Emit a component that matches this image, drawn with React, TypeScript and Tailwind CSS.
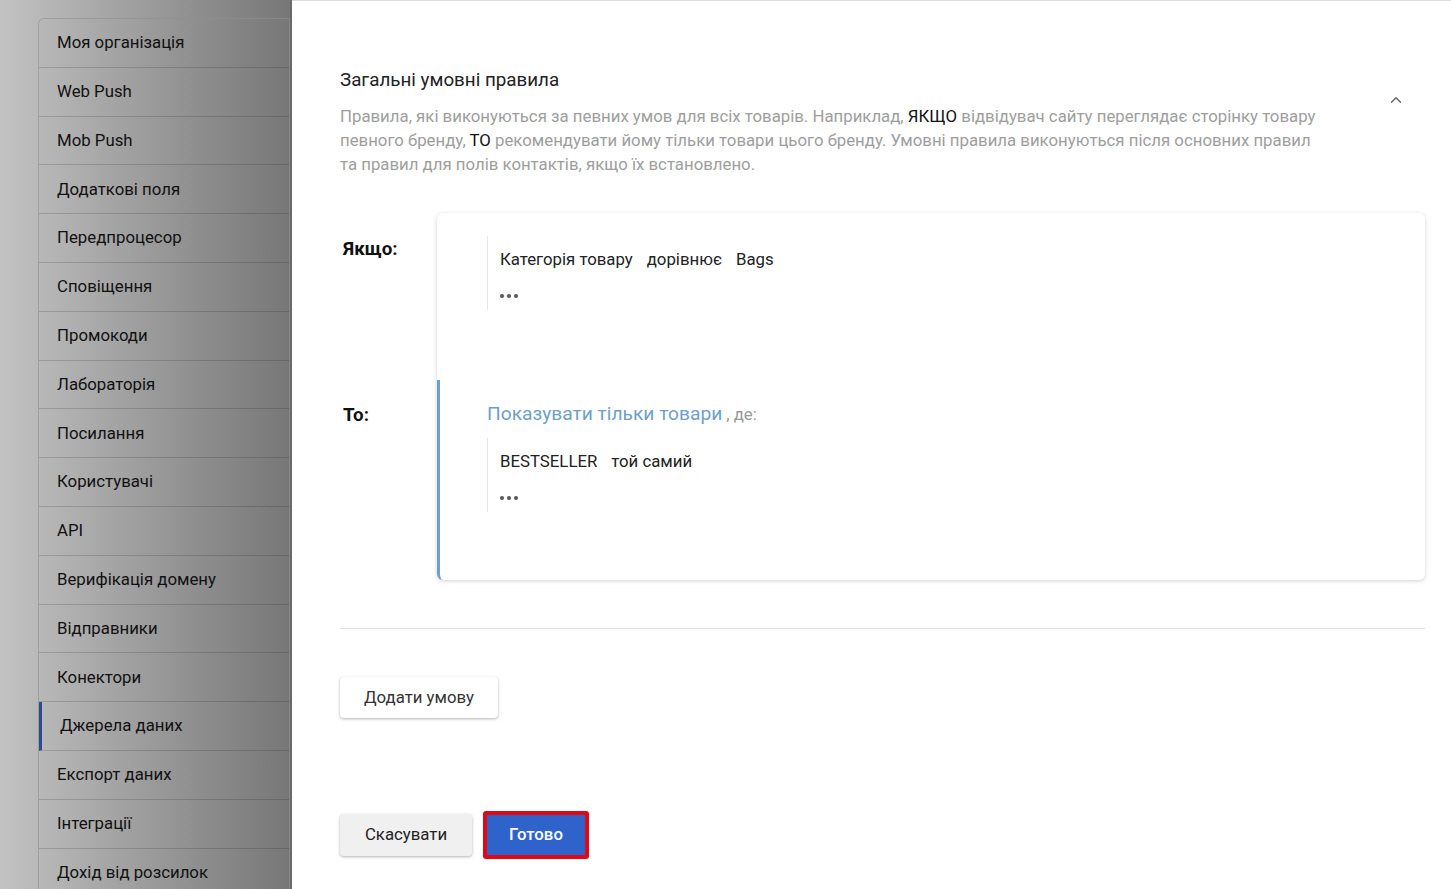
import { ChevronUp } from "lucide-react";

const menu = [
  "Моя організація",
  "Web Push",
  "Mob Push",
  "Додаткові поля",
  "Передпроцесор",
  "Сповіщення",
  "Промокоди",
  "Лабораторія",
  "Посилання",
  "Користувачі",
  "API",
  "Верифікація домену",
  "Відправники",
  "Конектори",
  "Джерела даних",
  "Експорт даних",
  "Інтеграції",
  "Дохід від розсилок",
];

const Dots = () => (
  <div className="flex items-center gap-[3px] h-[12px]">
    <span className="w-[4px] h-[4px] rounded-full bg-[#555]" />
    <span className="w-[4px] h-[4px] rounded-full bg-[#555]" />
    <span className="w-[4px] h-[4px] rounded-full bg-[#555]" />
  </div>
);

const Condition = ({ items }: { items: string[] }) => (
  <div className="border-l border-[#e6e6e6] pl-[12px] pt-[11px] pb-[8px]">
    <div className="flex gap-[14px] text-[16.8px] leading-[24px] text-[#222]">
      {items.map((t) => (
        <span key={t}>{t}</span>
      ))}
    </div>
    <div className="mt-[19px]">
      <Dots />
    </div>
  </div>
);

const App = () => {
  return (
    <div
      className="flex h-[889px] w-full overflow-hidden bg-white"
      style={{ fontFamily: "Roboto, 'Liberation Sans', sans-serif" }}
    >
      {/* Sidebar */}
      <aside className="w-[292px] shrink-0 bg-gradient-to-r from-[#c3c3c3] to-[#777777] pl-[38px] pt-[18px] border-r-2 border-[#6a6a6a]">
        <div className="w-[252px] rounded-tl-md border border-[#8f8f8f]/60 border-b-0">
          {menu.map((item) => {
            const active = item === "Джерела даних";
            return (
              <div
                key={item}
                className={`h-[48.8px] flex items-center border-b border-black/15 text-[16.8px] text-[#111] ${
                  active ? "border-l-[3px] border-l-[#2b4c92] pl-[18px]" : "pl-[18px]"
                }`}
              >
                {item}
              </div>
            );
          })}
        </div>
      </aside>

      {/* Main */}
      <main className="flex-1 border-t border-[#dcdcdc] pl-[48px] pr-[26px] pt-[67px]">
        <div className="flex justify-between">
          <div>
            <h2 className="text-[18.8px] leading-[24px] text-[#222]">
              Загальні умовні правила
            </h2>
            <p className="mt-[12px] text-[16.8px] leading-[24px] text-[#9e9e9e]">
              Правила, які виконуються за певних умов для всіх товарів. Наприклад,{" "}
              <span className="text-[#111]">ЯКЩО</span> відвідувач сайту переглядає сторінку товару
              <br />
              певного бренду, <span className="text-[#111]">ТО</span> рекомендувати йому тільки
              товари цього бренду. Умовні правила виконуються після основних правил
              <br />
              та правил для полів контактів, якщо їх встановлено.
            </p>
          </div>
          <ChevronUp className="mt-[23px] mr-[20px] w-[18px] h-[18px] text-[#666]" strokeWidth={2} />
        </div>

        {/* Rules */}
        <div className="mt-[37px] grid grid-cols-[97px_1fr] grid-rows-[167px_200px]">
          <div className="pt-[22px] pl-[3px] text-[18.8px] font-bold text-[#111]">Якщо:</div>
          <div className="col-start-2 row-start-1 row-span-2 flex flex-col rounded-md bg-white shadow-[0_1px_4px_rgba(0,0,0,0.18)]">
            <div className="h-[167px] pl-[50px] pt-[23px]">
              <Condition items={["Категорія товару", "дорівнює", "Bags"]} />
            </div>
            <div className="h-[200px] border-l-[3px] border-[#6ea0c8] rounded-bl-md pl-[47px] pt-[20px]">
              <div className="flex items-baseline text-[#999]">
                <span className="text-[19.2px] text-[#6ea0c8]">Показувати тільки товари</span>
                <span className="ml-[4px] text-[16.8px]">, де:</span>
              </div>
              <div className="mt-[9px]">
                <Condition items={["BESTSELLER", "той самий"]} />
              </div>
            </div>
          </div>
          <div className="row-start-2 col-start-1 pt-[21px] pl-[3px] text-[18.8px] font-bold text-[#111]">
            То:
          </div>
        </div>

        <div className="mt-[48px] border-t border-[#e2e2e2]" />

        <button className="mt-[48px] h-[41px] w-[158px] rounded bg-white text-[16.8px] text-[#333] shadow-[0_1px_3px_rgba(0,0,0,0.3)]">
          Додати умову
        </button>

        <div className="mt-[93px] flex items-center gap-[11px]">
          <button className="h-[42px] w-[132px] rounded bg-[#f0f0f0] text-[16.8px] text-[#222] shadow-[0_1px_3px_rgba(0,0,0,0.3)]">
            Скасувати
          </button>
          <div className="rounded-[3px] border-[4px] border-[#e30613]">
            <button className="h-[40px] w-[98px] bg-[#2e63cc] text-[16.8px] font-medium text-white">
              Готово
            </button>
          </div>
        </div>
      </main>
    </div>
  );
};

export default App;
